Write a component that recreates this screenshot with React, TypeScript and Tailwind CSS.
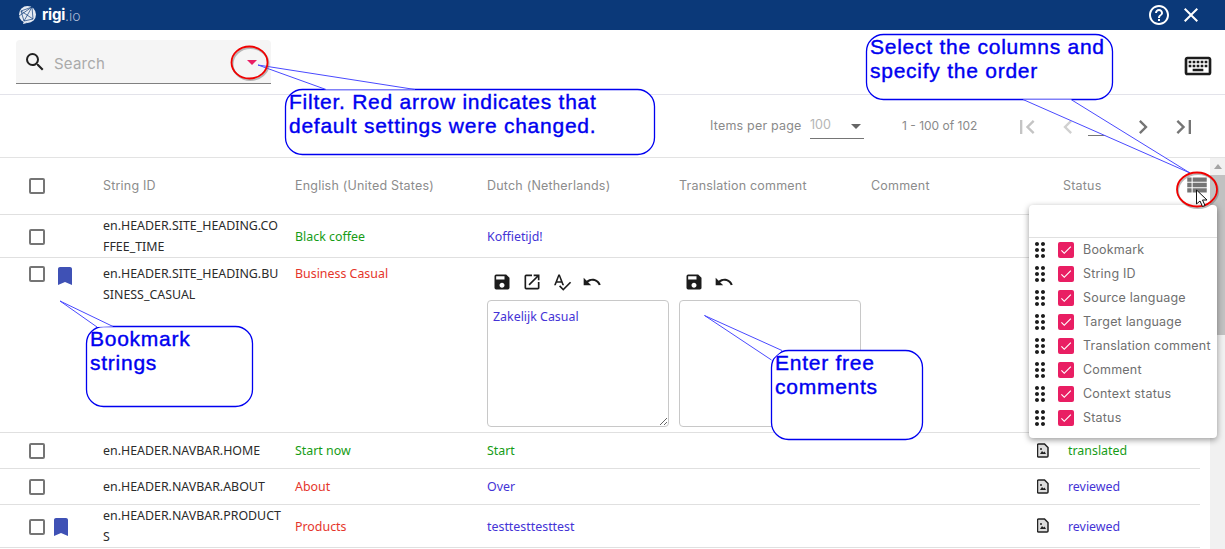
import {
  MdArrowDropDown,
  MdBookmark,
  MdChevronLeft,
  MdChevronRight,
  MdClose,
  MdDragIndicator,
  MdFirstPage,
  MdHelpOutline,
  MdLastPage,
  MdOpenInNew,
  MdOutlineKeyboard,
  MdSave,
  MdSearch,
  MdSpellcheck,
  MdUndo,
  MdViewList,
  MdCheck,
} from "react-icons/md";

const GREEN = "text-[#169c16]";
const RED = "text-[#e5352b]";
const BLUE = "text-[#4433d6]";
const NOTE = "absolute text-[21px] leading-[24px] font-['Liberation_Sans',sans-serif] text-[#0000f0] tracking-[0.75px] whitespace-nowrap [-webkit-text-stroke:0.4px_#0000f0]";

function Box() {
  return <div className="w-4 h-4 border-2 border-[#757575] rounded-[2px] shrink-0" />;
}

function FileIcon() {
  return (
    <svg width="12" height="15" viewBox="0 0 12 15" className="shrink-0">
      <path d="M1.5 1h6l3.5 3.5v8.5a1 1 0 0 1-1 1h-8.500a1 1 0 0 1-1-1v-11a1 1 0 0 1 1-1z" fill="#ddd" stroke="#222" strokeWidth="1.500" />
      <path d="M3 11l2-3 1.500 1.500 1-1L9 11z" fill="#222" />
      <circle cx="4" cy="6" r="1" fill="#222" />
    </svg>
  );
}

function Logo() {
  return (
    <div className="flex items-center ml-[18px] h-full">
      <svg width="19" height="21" viewBox="0 0 19 21" fill="none">
        <circle cx="9.500" cy="9.500" r="8.500" fill="#e6ebf3" />
        <path d="M5 19l1-3 3 2z" fill="#e6ebf3" />
        <path d="M3 6l11-4 1 12-9 2zM3 6l12 8M14 2l-8 14M1 11l13-9" stroke="#0b3979" strokeWidth="0.700" />
      </svg>
      <span className="ml-[5px] text-[15px] font-bold text-white font-['Inter',sans-serif] tracking-[-0.2px]">rigi</span>
      <span className="text-[14px] font-light text-[#a9b8d2] font-['Inter',sans-serif]">.io</span>
    </div>
  );
}

function SearchRow() {
  return (
    <div className="flex justify-between h-[65px] border-b border-[#e3e3ea] pl-4 pr-[11px]">
      <div className="mt-[10px] w-[255px] h-[44px] flex items-center bg-[#f5f5f5] rounded-t border-b border-[#808080] pl-[7px] pr-[7px]">
        <MdSearch size={24} className="text-[#222]" />
        <span className="ml-[7px] pt-[5px] text-[15px] text-[#aaa] font-['Inter',sans-serif] tracking-[0.2px]">Search</span>
        <MdArrowDropDown size={24} className="ml-auto text-[#e91e63]" />
      </div>
      <div className="flex items-center mt-[8px]">
        <MdOutlineKeyboard size={32} className="text-[#1c1c1c]" />
      </div>
    </div>
  );
}

function Pager() {
  return (
    <div className="flex items-center h-[63px] border-b border-[#e3e3e3] pl-[710px] text-[12.5px] text-[#8a8a8a] font-['Inter',sans-serif]">
      <span className="w-[100px] tracking-[0.2px]">Items per page</span>
      <div className="w-[54px] h-[26px] flex items-center justify-between border-b border-[#757575]">
        <span className="text-[#b5b5b5]">100</span>
        <MdArrowDropDown size={24} className="text-[#666] -mr-[4px]" />
      </div>
      <span className="ml-[38px] w-[111px] text-[12px]">1 - 100 of 102</span>
      <MdFirstPage size={28} className="mt-[2px] text-[#c4c4c4]" />
      <MdChevronLeft size={28} className="mt-[2px] ml-[13px] text-[#d0d0d0]" />
      <div className="ml-[6px] w-[41px] h-[19px] border-b border-[#757575]" />
      <MdChevronRight size={28} className="mt-[2px] text-[#757575]" />
      <MdLastPage size={28} className="mt-[2px] ml-[13px] text-[#757575]" />
    </div>
  );
}

function HeaderRow() {
  const cols = ["String ID", "English (United States)", "Dutch (Netherlands)", "Translation comment", "Comment", "Status"];
  return (
    <div className="flex items-center h-[57px] border-b border-[#e0e0e0] text-[12.500px] tracking-[0.2px] text-[#8c8c8c] font-['Inter',sans-serif]">
      <div className="w-[103px] shrink-0 pl-[29px]">
        <Box />
      </div>
      {cols.map((c) => (
        <div key={c} className="w-[192px] shrink-0 whitespace-nowrap">
          {c}
        </div>
      ))}
    </div>
  );
}

type RowData = {
  id: string[];
  source: string;
  sourceColor: string;
  target: string;
  targetColor: string;
  status?: string;
  statusColor?: string;
  height: string;
  bookmark?: boolean;
};

const rows: RowData[] = [
  { id: ["en.HEADER.SITE_HEADING.CO", "FFEE_TIME"], source: "Black coffee", sourceColor: GREEN, target: "Koffietijd!", targetColor: BLUE, height: "h-[43px]" },
  { id: ["en.HEADER.NAVBAR.HOME"], source: "Start now", sourceColor: GREEN, target: "Start", targetColor: GREEN, status: "translated", statusColor: GREEN, height: "h-[36px]" },
  { id: ["en.HEADER.NAVBAR.ABOUT"], source: "About", sourceColor: RED, target: "Over", targetColor: BLUE, status: "reviewed", statusColor: BLUE, height: "h-[36px]" },
  { id: ["en.HEADER.NAVBAR.PRODUCT", "S"], source: "Products", sourceColor: RED, target: "testtesttesttest", targetColor: BLUE, status: "reviewed", statusColor: BLUE, height: "h-[43px]", bookmark: true },
];

function Row({ r }: { r: RowData }) {
  const nudge = r.id.length > 1 ? "pt-[2px]" : "";
  return (
    <div className={`flex items-center ${r.height} border-b border-[#e0e0e0]`}>
      <div className={`w-[103px] pl-[29px] flex items-center shrink-0 ${nudge}`}>
        <Box />
        {r.bookmark && <MdBookmark size={24} className="ml-[4px] text-[#3f51b5]" />}
      </div>
      <div className="w-[192px] shrink-0 leading-[21px] text-[#2b2b2b]">
        {r.id.map((l) => (
          <div key={l}>{l}</div>
        ))}
      </div>
      <div className={`w-[192px] shrink-0 pt-[2px] ${r.sourceColor}`}>{r.source}</div>
      <div className={`w-[192px] shrink-0 pt-[2px] ${r.targetColor}`}>{r.target}</div>
      <div className="w-[355px] shrink-0" />
      {r.status && (
        <div className="flex items-center w-[100px] pl-[4px] -ml-[1px]">
          <FileIcon />
          <span className={`ml-[19px] pt-[2px] ${r.statusColor}`}>{r.status}</span>
        </div>
      )}
    </div>
  );
}

function EditRow() {
  return (
    <div className="flex h-[175px] border-b border-[#e0e0e0]">
      <div className="w-[103px] pl-[29px] pt-2 flex items-start shrink-0">
        <Box />
        <MdBookmark size={24} className="ml-[8px] text-[#3f51b5] -mt-[2px]" />
      </div>
      <div className="w-[192px] shrink-0 pt-[5px] leading-[21px] text-[#2b2b2b]">
        <div>en.HEADER.SITE_HEADING.BU</div>
        <div>SINESS_CASUAL</div>
      </div>
      <div className={`w-[192px] shrink-0 pt-[5px] leading-[21px] ${RED}`}>Business Casual</div>
      <div className="w-[192px] shrink-0 pt-[14px]">
        <div className="flex items-center gap-[10px] pl-[5px] h-[20px] text-[#1c1c1c]">
          <MdSave size={20} />
          <MdOpenInNew size={20} />
          <MdSpellcheck size={20} />
          <MdUndo size={20} />
        </div>
        <textarea
          readOnly
          defaultValue="Zakelijk Casual"
          className={`mt-[8px] block w-[182px] h-[127px] border border-[#c8c8c8] rounded px-[5px] py-[6px] leading-[20px] outline-none ${BLUE}`}
        />
      </div>
      <div className="w-[192px] shrink-0 pt-[14px]">
        <div className="flex items-center gap-[10px] pl-[5px] h-[20px] text-[#1c1c1c]">
          <MdSave size={20} />
          <MdUndo size={20} />
        </div>
        <textarea readOnly className="mt-[8px] block w-[182px] h-[127px] border border-[#c8c8c8] rounded outline-none resize-none" />
      </div>
    </div>
  );
}

function ColumnMenu() {
  const items = ["Bookmark", "String ID", "Source language", "Target language", "Translation comment", "Comment", "Context status", "Status"];
  return (
    <div className="absolute left-[1029px] top-[205px] w-[188px] h-[233px] bg-white rounded shadow-[0_2px_6px_rgba(0,0,0,0.4)] font-['Inter',sans-serif]">
      <div className="h-[33px] border-b border-[#e0e0e0]" />
      {items.map((label) => (
        <div key={label} className="flex items-center h-[24px]">
          <MdDragIndicator size={24} className="text-[#1c1c1c] -ml-[1px] shrink-0" />
          <div className="ml-[6px] w-4 h-4 rounded-[2px] bg-[#e91e63] flex items-center justify-center shrink-0">
            <MdCheck size={14} className="text-white" />
          </div>
          <span className="ml-[9px] text-[12.500px] tracking-[0.2px] text-[#6f6f6f] whitespace-nowrap">{label}</span>
        </div>
      ))}
    </div>
  );
}

const callouts = [
  { x: 285.5, y: 89.5, w: 369, h: 65, tail: "258,65 326,89.500 415,89.500" },
  { x: 866.5, y: 34.5, w: 246, h: 65, tail: "1190,173 1023,99.500 1071,99.500" },
  { x: 86.5, y: 326.5, w: 166, h: 80, tail: "60,301 97,327 113,326.500" },
  { x: 771.5, y: 350.5, w: 151, h: 89, tail: "704.500,315.500 782,350.500 771.500,360" },
];

function Annotations() {
  return (
    <>
      <svg className="absolute left-0 top-0 pointer-events-none" width="1225" height="549" fill="none">
        {callouts.map((c) => {
          const pts = c.tail.split(" ");
          return (
            <g key={c.x}>
              <rect x={c.x} y={c.y} width={c.w} height={c.h} rx="17" fill="#fff" stroke="#0000f0" strokeWidth="1.300" />
              <polygon points={c.tail} fill="#fff" />
              <polyline points={`${pts[1]} ${pts[0]} ${pts[2]}`} stroke="#4a4aff" strokeWidth="1" />
            </g>
          );
        })}
        <ellipse cx="249.500" cy="63" rx="18" ry="16" stroke="#777" strokeOpacity="0.500" strokeWidth="2" transform="translate(1 1)" />
        <ellipse cx="249.500" cy="62.500" rx="18" ry="16" stroke="#f00000" strokeWidth="1.800" />
        <ellipse cx="1197" cy="190" rx="20" ry="17" stroke="#777" strokeOpacity="0.500" strokeWidth="2" transform="translate(1 1)" />
        <ellipse cx="1197" cy="189.500" rx="20" ry="17" stroke="#f00000" strokeWidth="1.800" />
        <path d="M1196.500 190v14l3.500-3 2.500 5.500 2.500-1-2.500-5.500h4.500z" fill="#fff" stroke="#111" strokeWidth="1" />
      </svg>
      <div className={`${NOTE} left-[289px] top-[90px]`}>
        Filter. Red arrow indicates that
        <br />
        default settings were changed.
      </div>
      <div className={`${NOTE} left-[870px] top-[35px]`}>
        Select the columns and
        <br />
        specify the order
      </div>
      <div className={`${NOTE} left-[90px] top-[327px]`}>
        Bookmark
        <br />
        strings
      </div>
      <div className={`${NOTE} left-[775px] top-[351px]`}>
        Enter free
        <br />
        comments
      </div>
    </>
  );
}

export default function App() {
  return (
    <div className="relative w-[1225px] h-[549px] overflow-hidden bg-white text-[12.400px] font-['Noto_Sans',sans-serif]">
      {/* top bar */}
      <div className="flex items-center justify-between h-[30px] bg-[#0b3979] pr-[22px]">
        <Logo />
        <div className="flex items-center gap-2 text-white">
          <MdHelpOutline size={24} />
          <MdClose size={24} />
        </div>
      </div>

      <SearchRow />
      <Pager />

      <div className="flex">
        <div className="w-[1200px] shrink-0">
          <HeaderRow />
          <Row r={rows[0]} />
          <EditRow />
          <Row r={rows[1]} />
          <Row r={rows[2]} />
          <Row r={rows[3]} />
        </div>
        {/* scrollbar */}
        <div className="ml-[10px] w-[15px] h-[391px] bg-[#f1f1f1] flex flex-col items-center">
          <div className="h-[17px] flex items-center">
            <div className="w-0 h-0 border-x-[4px] border-x-transparent border-b-[5px] border-b-[#a3a3a3]" />
          </div>
          <div className="w-full h-[160px] bg-[#c1c1c1]" />
        </div>
      </div>

      <MdViewList size={26} className="absolute left-[1184px] top-[172px] text-[#757575]" />
      <ColumnMenu />
      <Annotations />
    </div>
  );
}
